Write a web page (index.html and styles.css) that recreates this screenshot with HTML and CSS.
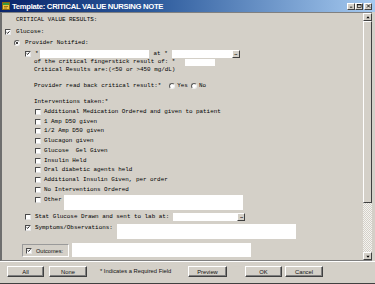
FILE: index.html
```html
<!DOCTYPE html>
<html>
<head>
<meta charset="utf-8">
<link rel="stylesheet" href="styles.css">
</head>
<body>
<div class="window">
  <div class="titlebar">
    <svg class="appicon" viewBox="0 0 8 8"><rect x="0.5" y="0.5" width="7" height="7" fill="#f0c040" stroke="#8a6a10" stroke-width="1"/><rect x="1" y="1" width="6" height="2" fill="#3c9a3c"/><path d="M2 4.5h4M2 6h3" stroke="#8a6a10" stroke-width="0.8"/></svg>
    <span class="title">Template: CRITICAL VALUE NURSING NOTE</span>
    <div class="tbtns">
      <span class="tbtn"><svg viewBox="0 0 6 5"><path d="M1 4h3" stroke="#000" stroke-width="1"/></svg></span>
      <span class="tbtn"><svg viewBox="0 0 6 5"><rect x="0.5" y="0.5" width="4.5" height="4" fill="none" stroke="#000" stroke-width="0.8"/><path d="M0.5 1h4.5" stroke="#000" stroke-width="1"/></svg></span>
      <span class="tbtn close"><svg viewBox="0 0 6 5"><path d="M1 0.5l4 4M5 0.5l-4 4" stroke="#000" stroke-width="1"/></svg></span>
    </div>
  </div>

  <div class="main">
    <div class="content">
      <div class="row r1"><span class="lbl">CRITICAL VALUE RESULTS:</span></div>
      <div class="row r2"><span class="cb on"><svg viewBox="0 0 7 7"><path d="M1 3.2L2.8 5L6 1.5"/></svg></span><span class="lbl g5">Glucose:</span></div>
      <div class="row r3"><span class="rd on"></span><span class="lbl g5">Provider Notified:</span></div>
      <div class="row r4">
        <span class="cb on"><svg viewBox="0 0 7 7"><path d="M1 3.2L2.8 5L6 1.5"/></svg></span>
        <span class="lbl g4">*</span>
        <span class="inp i-who"></span>
        <span class="lbl at">at *</span>
        <span class="inp i-when"></span><span class="dots">...</span>
      </div>
      <div class="row r5"><span class="lbl">of the critical fingerstick result of: *</span><span class="inp i-val"></span></div>
      <div class="row r6"><span class="lbl">Critical Results are:(&lt;50 or &gt;450 mg/dL)</span></div>
      <div class="row r7">
        <span class="lbl">Provider read back critical result:*</span>
        <span class="rd yes"></span><span class="lbl g2">Yes</span>
        <span class="rd no"></span><span class="lbl g2">No</span>
      </div>
      <div class="row r8"><span class="lbl">Interventions taken:*</span></div>

      <div class="row item"><span class="cb"></span><span class="lbl g3">Additional Medication Ordered and given to patient</span></div>
      <div class="row item"><span class="cb"></span><span class="lbl g3">1 Amp D50 given</span></div>
      <div class="row item"><span class="cb"></span><span class="lbl g3">1/2 Amp D50 given</span></div>
      <div class="row item"><span class="cb"></span><span class="lbl g3">Glucagon given</span></div>
      <div class="row item"><span class="cb"></span><span class="lbl g3">Glucose  Gel Given</span></div>
      <div class="row item"><span class="cb"></span><span class="lbl g3">Insulin Held</span></div>
      <div class="row item"><span class="cb"></span><span class="lbl g3">Oral diabetic agents held</span></div>
      <div class="row item"><span class="cb"></span><span class="lbl g3">Additional Insulin Given, per order</span></div>
      <div class="row item"><span class="cb"></span><span class="lbl g3">No Interventions Ordered</span></div>
      <div class="row other">
        <span class="cb"></span><span class="lbl g3">Other</span>
        <span class="inp i-other"></span>
      </div>

      <div class="row stat">
        <span class="cb"></span><span class="lbl g4">Stat Glucose Drawn and sent to lab at:</span>
        <span class="inp i-stat"></span><span class="dots">...</span>
      </div>
      <div class="row sym">
        <span class="cb on"><svg viewBox="0 0 7 7"><path d="M1 3.2L2.8 5L6 1.5"/></svg></span><span class="lbl g4">Symptoms/Observations:</span>
        <span class="inp i-sym"></span>
      </div>
      <div class="row out">
        <span class="obox"><span class="cb on"><svg viewBox="0 0 7 7"><path d="M1 3.2L2.8 5L6 1.5"/></svg></span><span class="olbl">Outcomes:</span></span>
        <span class="inp i-out"></span>
      </div>
    </div>
    <div class="vscroll">
      <div class="sb-btn"><svg viewBox="0 0 7 6"><path d="M3.5 1.5L1.5 4h4z" fill="#000"/></svg></div>
      <div class="sb-thumb"></div>
      <div class="sb-track"></div>
      <div class="sb-btn"><svg viewBox="0 0 7 6"><path d="M3.5 4.5L1.5 2h4z" fill="#000"/></svg></div>
    </div>
  </div>

  <div class="footer">
    <span class="btn b-all">All</span>
    <span class="btn b-none">None</span>
    <span class="req">* Indicates a Required Field</span>
    <span class="btn b-prev">Preview</span>
    <span class="btn b-ok">OK</span>
    <span class="btn b-cancel">Cancel</span>
  </div>
  <div class="frame-bottom"></div>
</div>
</body>
</html>
```

FILE: styles.css
```css
* { box-sizing: border-box; }
html, body { margin: 0; padding: 0; }
body {
  width: 375px;
  height: 284px;
  overflow: hidden;
  background: #d4d0c8;
  font-family: "Liberation Mono", "Courier New", monospace;
  font-size: 5.9px;
  color: #000;
}
.window { width: 375px; height: 284px; display: flex; flex-direction: column; }

/* title bar */
.titlebar {
  height: 12px;
  flex: none;
  display: flex;
  align-items: center;
  padding: 0 3px 0 2px;
  background: linear-gradient(90deg, #0a246a 0%, #2c5a9c 40%, #a6caf0 100%);
}
.appicon { width: 8px; height: 8px; margin-right: 2px; flex: none; }
.title {
  flex: 1;
  color: #fff;
  font-family: "Liberation Sans", Arial, sans-serif;
  font-weight: bold;
  font-size: 7.7px;
  letter-spacing: -0.3px;
  white-space: nowrap;
}
.tbtns { display: flex; }
.tbtn {
  width: 8px;
  height: 7px;
  background: #d4d0c8;
  border: 1px solid;
  border-color: #fff #404040 #404040 #fff;
  display: flex;
  align-items: center;
  justify-content: center;
}
.tbtn svg { width: 5px; height: 4px; }
.tbtn.close { margin-left: 1px; }

/* main scroll area */
.main {
  flex: none;
  height: 249px;
  display: flex;
  margin-right: 3px;
  border-top: 1px solid #808080;
  border-left: 2px solid #6e6e6e;
  border-bottom: 1px solid #808080;
}
.content { flex: 1; display: flex; flex-direction: column; }
.row { display: flex; align-items: center; height: 10px; flex: none; white-space: pre; }
.lbl { white-space: pre; line-height: 8px; }
.g2 { margin-left: 2px; }
.g3 { margin-left: 3px; }
.g4 { margin-left: 4px; }
.g5 { margin-left: 5px; }

.r1 { margin-top: 2px; padding-left: 14px; }
.r2 { margin-top: 2px; padding-left: 3px; }
.r3 { margin-top: 1px; padding-left: 12px; }
.r4 { margin-top: 1px; height: 9px; padding-left: 23px; }
.r5 { height: 8px; padding-left: 32px; }
.r6 { height: 8px; padding-left: 32px; }
.r7 { margin-top: 7px; padding-left: 32px; }
.r8 { margin-top: 6px; padding-left: 32px; }
.item { height: 9.75px; padding-left: 33px; }
.other { height: 15px; padding-left: 33px; align-items: flex-start; }
.other .cb { margin-top: 2px; }
.other .lbl { line-height: 10px; }
.stat { margin-top: 2px; padding-left: 23px; }
.sym { margin-top: 2px; height: 15px; padding-left: 23px; align-items: flex-start; }
.sym .cb { margin-top: 1px; }
.sym .lbl { line-height: 8px; }
.out { margin-top: 4px; height: 14px; padding-left: 20px; }

/* controls */
.cb {
  width: 6px;
  height: 6px;
  flex: none;
  background: #fff;
  border: 1px solid;
  border-color: #4a4a4a #e6e6e6 #e6e6e6 #4a4a4a;
  display: flex;
  align-items: center;
  justify-content: center;
}
.cb svg { width: 5px; height: 5px; }
.cb svg path { fill: none; stroke: #000; stroke-width: 1.6; }
.rd {
  width: 6px;
  height: 6px;
  flex: none;
  border-radius: 50%;
  background: #fff;
  border: 1px solid;
  border-color: #5a5a5a #eee #eee #5a5a5a;
  position: relative;
}
.rd.on::after {
  content: "";
  position: absolute;
  left: 1px;
  top: 1px;
  width: 2px;
  height: 2px;
  border-radius: 50%;
  background: #000;
}
.rd.yes { margin-left: 8px; }
.rd.no { margin-left: 3px; }

.inp { background: #fff; flex: none; display: block; }
.i-who { width: 109px; height: 8px; margin-left: 1px; }
.at { margin-left: 5px; }
.i-when { width: 60px; height: 8px; margin-left: 4px; }
.i-val { width: 30px; height: 7px; margin-left: 10px; }
.i-other { width: 179px; height: 15px; margin-left: 2px; }
.i-stat { width: 64px; height: 8px; margin-left: 4px; }
.i-sym { width: 179px; height: 15px; margin-left: 4px; }
.i-out { width: 179px; height: 14px; margin-left: 3px; }

.dots {
  width: 8px;
  height: 8px;
  flex: none;
  background: #d4d0c8;
  border: 1px solid;
  border-color: #fff #404040 #404040 #fff;
  font-family: "Liberation Sans", Arial, sans-serif;
  font-weight: bold;
  font-size: 5px;
  line-height: 4px;
  text-align: center;
  letter-spacing: -0.5px;
  color: #000;
}

.obox {
  display: flex;
  align-items: center;
  width: 47px;
  height: 13px;
  margin-top: 2px;
  padding-left: 3px;
  border: 1px solid;
  border-color: #9a9a9a #fff #fff #9a9a9a;
}
.olbl {
  margin-left: 4px;
  font-family: "Liberation Sans", Arial, sans-serif;
  font-size: 5.6px;
  color: #111;
}

/* scrollbar */
.vscroll { width: 9px; flex: none; display: flex; flex-direction: column; }
.sb-btn {
  height: 8px;
  flex: none;
  background: #d4d0c8;
  border: 1px solid;
  border-color: #fff #404040 #404040 #fff;
  display: flex;
  align-items: center;
  justify-content: center;
}
.sb-btn svg { width: 6px; height: 5px; }
.sb-thumb {
  height: 182px;
  flex: none;
  background: #d4d0c8;
  border: 1px solid;
  border-color: #fff #404040 #404040 #fff;
}
.sb-track {
  flex: 1;
  background: repeating-conic-gradient(#f4f3f0 0 25%, #d4d0c8 0 50%) 0 0 / 2px 2px;
}

/* footer */
.footer {
  flex: none;
  height: 20px;
  display: flex;
  align-items: flex-start;
  padding: 4px 0 0 7px;
  border-top: 1px solid #fff;
  font-family: "Liberation Sans", Arial, sans-serif;
  font-size: 5.8px;
  color: #111;
}
.btn {
  height: 11px;
  flex: none;
  display: flex;
  align-items: center;
  justify-content: center;
  background: #d4d0c8;
  border: 1px solid;
  border-color: #fff #404040 #404040 #fff;
  box-shadow: inset -1px -1px 0 #808080;
}
.b-all { width: 37px; }
.b-none { width: 38px; margin-left: 5px; }
.req { width: 72px; margin-left: 13px; line-height: 11px; white-space: nowrap; }
.b-prev { width: 39px; margin-left: 16px; }
.b-ok { width: 37px; margin-left: 18px; }
.b-cancel { width: 38px; margin-left: 3px; }
.frame-bottom {
  flex: 1;
  border-bottom: 1px solid #404040;
}
```
